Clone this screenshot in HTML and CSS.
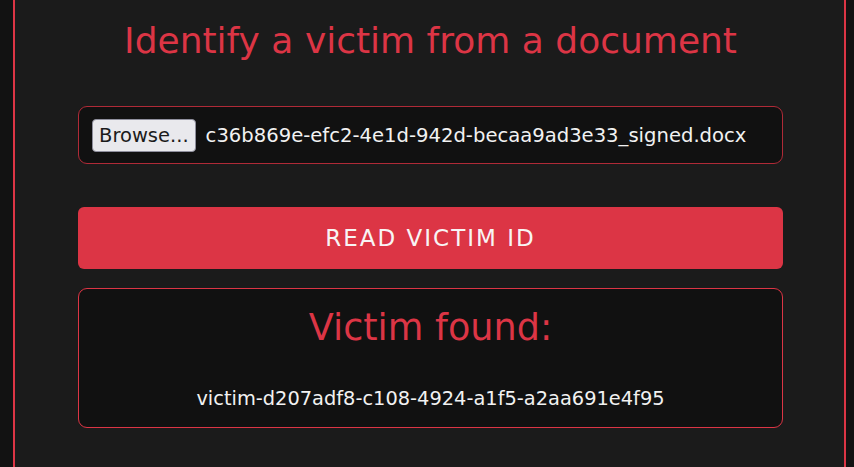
FILE: index.html
```html
<!DOCTYPE html>
<html lang="en">
<head>
<meta charset="utf-8">
<title>Identify a victim</title>
<link rel="stylesheet" href="styles.css">
</head>
<body>
<main class="card">
  <h1 class="title">Identify a victim from a document</h1>
  <div class="file-box">
    <span class="browse">Browse...</span>
    <span class="filename">c36b869e-efc2-4e1d-942d-becaa9ad3e33_signed.docx</span>
  </div>
  <button class="read-btn" type="button">READ VICTIM ID</button>
  <section class="result">
    <h2 class="result-title">Victim found:</h2>
    <p class="result-id">victim-d207adf8-c108-4924-a1f5-a2aa691e4f95</p>
  </section>
</main>
</body>
</html>
```

FILE: styles.css
```css
html, body {
  margin: 0;
  padding: 0;
  height: 100%;
}
body {
  background: #121212;
  font-family: "DejaVu Sans", "Open Sans", sans-serif;
  overflow: hidden;
}
.card {
  box-sizing: border-box;
  margin: 0 8px 0 13px;
  min-height: 100vh;
  background: #1b1b1b;
  border-left: 2px solid #dc3545;
  border-right: 2px solid #dc3545;
  padding: 19px 61px 0 63px;
  display: flex;
  flex-direction: column;
}
.title {
  margin: 0;
  font-size: 36px;
  line-height: 1.2;
  font-weight: 400;
  color: #dc3545;
  text-align: center;
}
.file-box {
  box-sizing: border-box;
  margin-top: 44px;
  height: 58px;
  border: 1px solid #b02a37;
  border-radius: 9px;
  background: #111111;
  display: flex;
  align-items: center;
  padding: 0 13px;
  gap: 10px;
}
.browse {
  box-sizing: border-box;
  height: 33px;
  padding: 0 6px;
  display: flex;
  align-items: center;
  background: #e9e9ed;
  border: 1px solid #8f8f9d;
  border-radius: 4px;
  color: #1b1b1b;
  font-size: 19.5px;
}
.filename {
  color: #f2f2f2;
  font-size: 19.6px;
}
.read-btn {
  margin-top: 43px;
  height: 62px;
  border: none;
  border-radius: 6px;
  background: #dc3545;
  color: #f8f4f4;
  font-family: inherit;
  font-size: 23px;
  letter-spacing: 2px;
  padding: 0;
}
.result {
  box-sizing: border-box;
  margin-top: 19px;
  height: 140px;
  border: 1px solid #dc3545;
  border-radius: 9px;
  background: #111111;
  text-align: center;
  padding-top: 17px;
}
.result-title {
  margin: 0;
  font-size: 36.6px;
  line-height: 1.2;
  font-weight: 400;
  color: #dc3545;
}
.result-id {
  margin: 36px 0 0;
  font-size: 19.4px;
  line-height: 1.3;
  color: #f2f2f2;
}
```
